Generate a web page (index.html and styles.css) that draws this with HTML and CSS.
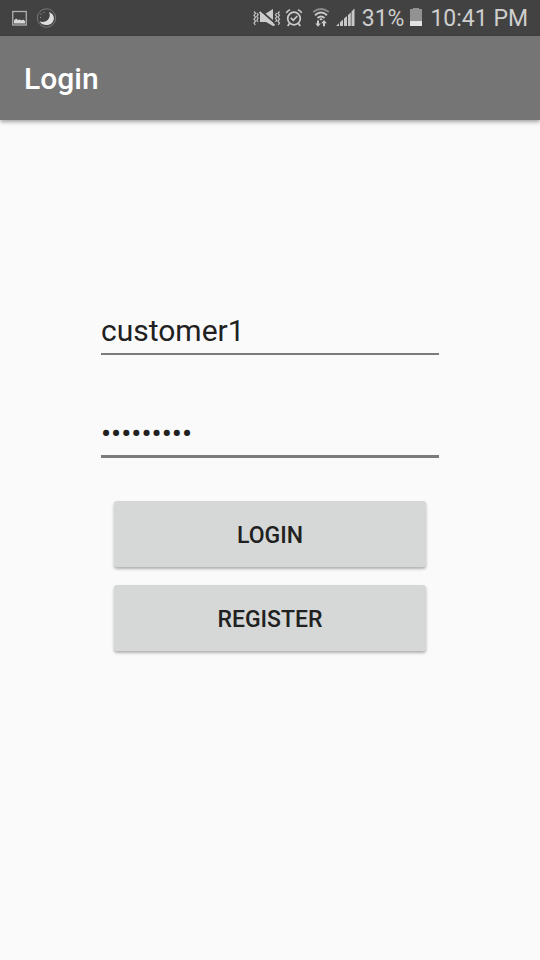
FILE: index.html
```html
<!DOCTYPE html>
<html lang="en">
<head>
<meta charset="utf-8">
<meta name="viewport" content="width=device-width, initial-scale=1">
<title>Login</title>
<link rel="stylesheet" href="styles.css">
</head>
<body>
<div class="status">
  <div class="status-group notices">
    <svg width="16" height="16" viewBox="0 0 16 16" aria-hidden="true"><rect x=".75" y="1.500" width="13.500" height="13.500" fill="none" stroke="#b0b0b0" stroke-width="1.300"/><path d="M2 13.500V10.500L4 8.500 6 10 8 9.500 9.500 10.500 11 9.500 13 11V13.500Z" fill="#d8d8d8"/></svg>
    <svg width="20" height="20" viewBox="0 0 20 20" aria-hidden="true"><circle cx="9.500" cy="10" r="9.200" fill="none" stroke="#777" stroke-width="1"/><path d="M12 4C17.500 6 18.300 11.500 15 15 11.500 18.300 5 17.500 2.500 13.500 6.500 14.500 9.300 13.700 11.300 11.200 13 9 13.300 6.600 12 4Z" fill="#dedede"/><path d="M3.500 6h1.200M6.500 4.500h1M3 9.500h1" stroke="#999"/></svg>
  </div>
  <div class="status-group">
    <svg width="28" height="20" viewBox="0 0 28 20" aria-hidden="true"><g fill="none" stroke="#c4c4c4" stroke-width="1.200"><path d="M1 3.500l1.500 1.800L1 7.200l1.500 2L1 11.200l1.500 2L1 15l1.300 1.800M3.800 5l1.300 1.700-1.300 1.800 1.300 1.800-1.300 1.900 1.300 1.800M26.500 3.500L25 5.300l1.500 1.900L25 9.200l1.500 2-1.500 2 1.500 1.800-1.300 1.800M23.800 5l-1.300 1.700 1.300 1.800-1.300 1.800 1.300 1.900-1.300 1.800"/></g><path d="M7 6H12L20 1V18L13 14H7Z" fill="#ccc"/><path d="M7.500 2.500L22 15" stroke="#424242" stroke-width="1.800"/><path d="M6.500 4L21.500 17.500" stroke="#ccc" stroke-width="2"/></svg>
    <svg class="alarm" width="18" height="20" viewBox="0 0 18 20" aria-hidden="true"><g fill="none" stroke="#ccc" stroke-width="1.700"><circle cx="9" cy="10.500" r="6.300"/><path d="M1.300 5Q2.500 2.500 5 1.700M16.700 5Q15.500 2.500 13 1.700M4.500 15.500L2.700 18M13.500 15.500L15.300 18M5.800 9.800L8.300 12.300 12.300 8"/></g></svg>
    <svg class="wifi" width="18" height="20" viewBox="0 0 18 20" aria-hidden="true"><g fill="none" stroke-width="1.900"><path d="M1.200 4Q9-2 16.800 4" stroke="#8a8a8a"/><path d="M3 7.200Q9 2 15 7.200M5.500 10Q9 7 12.500 10" stroke="#ccc"/></g><path d="M9 10L10.800 11.300 9 12.600 7.200 11.300ZM5 12.500H7V15.500H8.800L6 18.800 3.200 15.500H5ZM11 18.300V15.300H9.200L12 12 14.800 15.300H13V18.300Z" fill="#ccc"/></svg>
    <svg class="signal" width="19" height="20" viewBox="0 0 19 20" aria-hidden="true"><path d="M0 18L3 15.300V18ZM4 14.300L7 11.600V18H4ZM8 10.600L11 7.900V18H8ZM12 6.900L14.800 4.400V18H12ZM15.500 3.500L18.500 .5V18H15.500Z" fill="#c8c8c8"/></svg>
    <span class="percent">31%</span>
    <svg class="battery" width="12" height="20" viewBox="0 0 12 20" aria-hidden="true"><path d="M0 1H3V0H9V1H12V14H0Z" fill="#929292"/><path d="M0 13H12V18H0Z" fill="#e4e4e4"/></svg>
    <time class="clock">10:41 PM</time>
  </div>
</div>
<header class="bar"><h1>Login</h1></header>
<main>
  <form class="login">
    <input class="field" type="text" aria-label="Username" value="customer1">
    <input class="field active" type="password" aria-label="Password" value="customer1">
    <div class="actions">
      <button type="submit">LOGIN</button>
      <button type="button">REGISTER</button>
    </div>
  </form>
</main>
</body>
</html>
```
FILE: styles.css
```css
* { box-sizing: border-box; }
body {
  margin: 0;
  min-height: 100vh;
  display: flex;
  flex-direction: column;
  background: #fafafa;
  color: #212121;
  font-family: Roboto, "Liberation Sans", sans-serif;
}
.status {
  height: 36px;
  padding: 0 12px;
  display: flex;
  align-items: center;
  justify-content: space-between;
  background: #424242;
  color: #cecece;
  font-size: 23px;
  line-height: 36px;
}
.status-group { display: flex; align-items: center; }
.status svg { display: block; flex: none; }
.status span, .status time { padding-top: 2px; line-height: 34px; }
.notices { gap: 9px; }
.alarm { margin-left: 4px; }
.wifi { margin-left: 9px; }
.signal { margin-left: 6px; }
.percent { margin-left: 7px; }
.battery { margin-left: 6px; }
.clock { margin-left: 8px; }
.bar {
  height: 84px;
  padding: 2px 24px 0;
  display: flex;
  align-items: center;
  background: #757575;
  color: #fff;
  box-shadow: 0 2px 4px rgba(0, 0, 0, .35);
}
h1 { margin: 0; font-size: 30px; font-weight: 500; line-height: 36px; }
main {
  flex: 1;
  padding: 184px 101px 0;
}
.login { display: flex; flex-direction: column; }
.field {
  width: 100%;
  height: 51px;
  padding: 4px 0 0;
  border: 0;
  border-bottom: 2px solid #7b7b7b;
  border-radius: 0;
  outline: 0;
  background: transparent;
  color: #212121;
  font: 400 30px/36px Roboto, "Liberation Sans", sans-serif;
}
.field.active { margin-top: 52px; border-bottom-width: 3px; }
.actions {
  display: flex;
  flex-direction: column;
  gap: 18px;
  padding: 43px 13px 0;
}
button {
  height: 66px;
  padding: 4px 0 0;
  border: 0;
  border-radius: 3px;
  background: #d6d8d7;
  color: #212121;
  box-shadow: 0 2px 3px rgba(0, 0, 0, .3);
  font: 500 23px/28px Roboto, "Liberation Sans", sans-serif;
}
```
